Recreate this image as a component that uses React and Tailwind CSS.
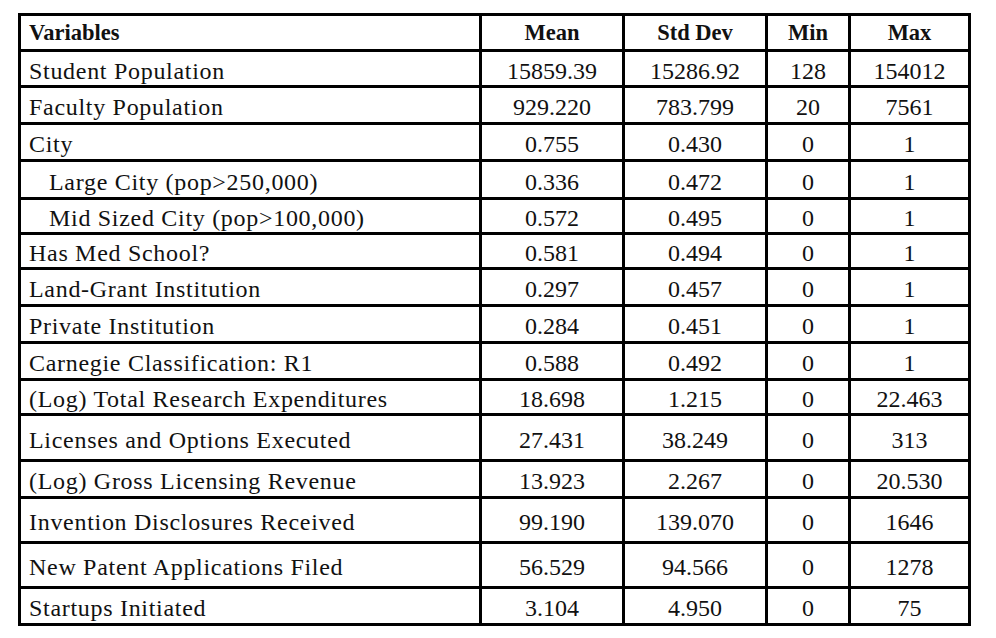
import React from 'react'

const rows = [
  { name: 'Student Population', mean: '15859.39', sd: '15286.92', min: '128', max: '154012', h: 'h-[36px]' },
  { name: 'Faculty Population', mean: '929.220', sd: '783.799', min: '20', max: '7561', h: 'h-[37px]' },
  { name: 'City', mean: '0.755', sd: '0.430', min: '0', max: '1', h: 'h-[37px]' },
  { name: 'Large City (pop>250,000)', mean: '0.336', sd: '0.472', min: '0', max: '1', h: 'h-[38px]', indent: true },
  { name: 'Mid Sized City (pop>100,000)', mean: '0.572', sd: '0.495', min: '0', max: '1', h: 'h-[35px]', indent: true },
  { name: 'Has Med School?', mean: '0.581', sd: '0.494', min: '0', max: '1', h: 'h-[35px]' },
  { name: 'Land-Grant Institution', mean: '0.297', sd: '0.457', min: '0', max: '1', h: 'h-[37px]' },
  { name: 'Private Institution', mean: '0.284', sd: '0.451', min: '0', max: '1', h: 'h-[37px]' },
  { name: 'Carnegie Classification: R1', mean: '0.588', sd: '0.492', min: '0', max: '1', h: 'h-[37px]' },
  { name: '(Log) Total Research Expenditures', mean: '18.698', sd: '1.215', min: '0', max: '22.463', h: 'h-[35px]' },
  { name: 'Licenses and Options Executed', mean: '27.431', sd: '38.249', min: '0', max: '313', h: 'h-[46px]' },
  { name: '(Log) Gross Licensing Revenue', mean: '13.923', sd: '2.267', min: '0', max: '20.530', h: 'h-[37px]' },
  { name: 'Invention Disclosures Received', mean: '99.190', sd: '139.070', min: '0', max: '1646', h: 'h-[45px]' },
  { name: 'New Patent Applications Filed', mean: '56.529', sd: '94.566', min: '0', max: '1278', h: 'h-[45px]' },
  { name: 'Startups Initiated', mean: '3.104', sd: '4.950', min: '0', max: '75', h: 'h-[34px]', last: true },
]

const Row = ({ row }) => (
  <div className={`flex ${row.h} ${row.last ? '' : 'border-b-[3px] border-black'}`}>
    <div className={`w-[461px] flex items-center pt-[4px] border-r-[3px] border-black tracking-[0.7px] ${row.indent ? 'pl-[28px]' : 'pl-[8px]'}`}>
      {row.name}
    </div>
    <div className="w-[143px] flex items-center justify-center pt-[4px] border-r-[3px] border-black">{row.mean}</div>
    <div className="w-[143px] flex items-center justify-center pt-[4px] border-r-[3px] border-black">{row.sd}</div>
    <div className="w-[83px] flex items-center justify-center pt-[4px] border-r-[3px] border-black">{row.min}</div>
    <div className="flex-1 flex items-center justify-center pt-[4px]">{row.max}</div>
  </div>
)

export default function App() {
  return (
    <div className="w-[996px] h-[638px] bg-white pt-[13px] pl-[18px] text-[#111] text-[24px] leading-none font-['Liberation_Serif','Times_New_Roman',serif]">
      <div className="w-[953px] border-[3px] border-black">
        <div className="flex h-[36px] border-b-[3px] border-black font-bold text-[22.5px]">
          <div className="w-[461px] flex items-center pl-[8px] pt-[2px] border-r-[3px] border-black">Variables</div>
          <div className="w-[143px] flex items-center justify-center pt-[2px] border-r-[3px] border-black">Mean</div>
          <div className="w-[143px] flex items-center justify-center pt-[2px] border-r-[3px] border-black">Std Dev</div>
          <div className="w-[83px] flex items-center justify-center pt-[2px] border-r-[3px] border-black">Min</div>
          <div className="flex-1 flex items-center justify-center pt-[2px]">Max</div>
        </div>
        {rows.map((row) => (
          <Row key={row.name} row={row} />
        ))}
      </div>
    </div>
  )
}
